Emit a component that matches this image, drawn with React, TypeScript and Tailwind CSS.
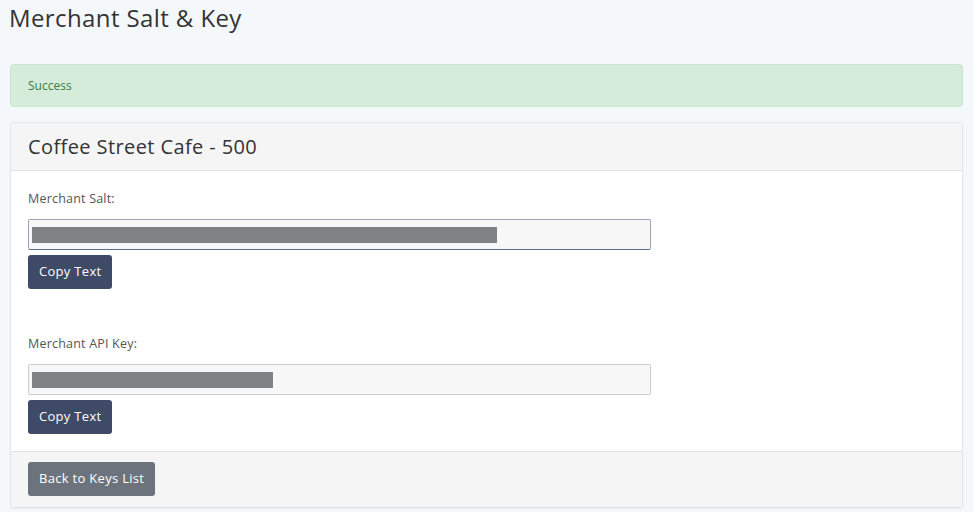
const font = { fontFamily: '"Open Sans", "Lato", "Liberation Sans", sans-serif' };

function KeyField({ label, barWidth, focused }: { label: string; barWidth: number; focused?: boolean }) {
  return (
    <div>
      <div className="text-[12.5px] leading-[18px] tracking-[0.2px] text-[#555]">{label}</div>
      <div
        className={
          "mt-[11px] flex h-[31px] w-[623px] items-center rounded-[2px] border bg-[#f7f7f7] px-[3px] " +
          (focused ? "border-[#9aa3b8] border-b-[#5f6d8c]" : "border-[#c9ccd3]")
        }
      >
        <div className="h-[16px] bg-[#808185]" style={{ width: barWidth }} />
      </div>
      <button className="mt-[5px] h-[34px] rounded-[3px] bg-[#3e4a66] px-[11px] text-[13px] tracking-[0.3px] text-white">
        Copy Text
      </button>
    </div>
  );
}

export default function App() {
  return (
    <div className="min-h-[512px] bg-[#f5f8fb] px-[10px] pb-[5px] pt-[3px]" style={font}>
      <h1 className="-ml-[1px] text-[24px] leading-[30px] tracking-[0.4px] text-[#333]">Merchant Salt &amp; Key</h1>

      <div className="mt-[31px] flex h-[43px] items-center rounded-[4px] border border-[#c9e4cf] bg-[#d4ecd9] px-[17px] text-[12px] text-[#3f7a45]">
        Success
      </div>

      <div className="mt-[15px] rounded-[3px] border border-[#e3e5e8] bg-white shadow-[0_1px_2px_rgba(0,0,0,0.05)]">
        <div className="flex h-[48px] items-center border-b border-[#e3e3e3] bg-[#f5f5f5] px-[17px] text-[20px] tracking-[0.4px] text-[#333]">
          Coffee Street Cafe - 500
        </div>
        <div className="px-[17px] pb-[17px] pt-[19px]">
          <KeyField label="Merchant Salt:" barWidth={465} focused />
          <div className="h-[46px]" />
          <KeyField label="Merchant API Key:" barWidth={241} />
        </div>
        <div className="border-t border-[#e3e3e3] bg-[#f5f5f5] px-[17px] pb-[11px] pt-[10px]">
          <button className="h-[34px] rounded-[3px] bg-[#6c737d] px-[11px] text-[13px] tracking-[0.3px] text-white">
            Back to Keys List
          </button>
        </div>
      </div>
    </div>
  );
}
